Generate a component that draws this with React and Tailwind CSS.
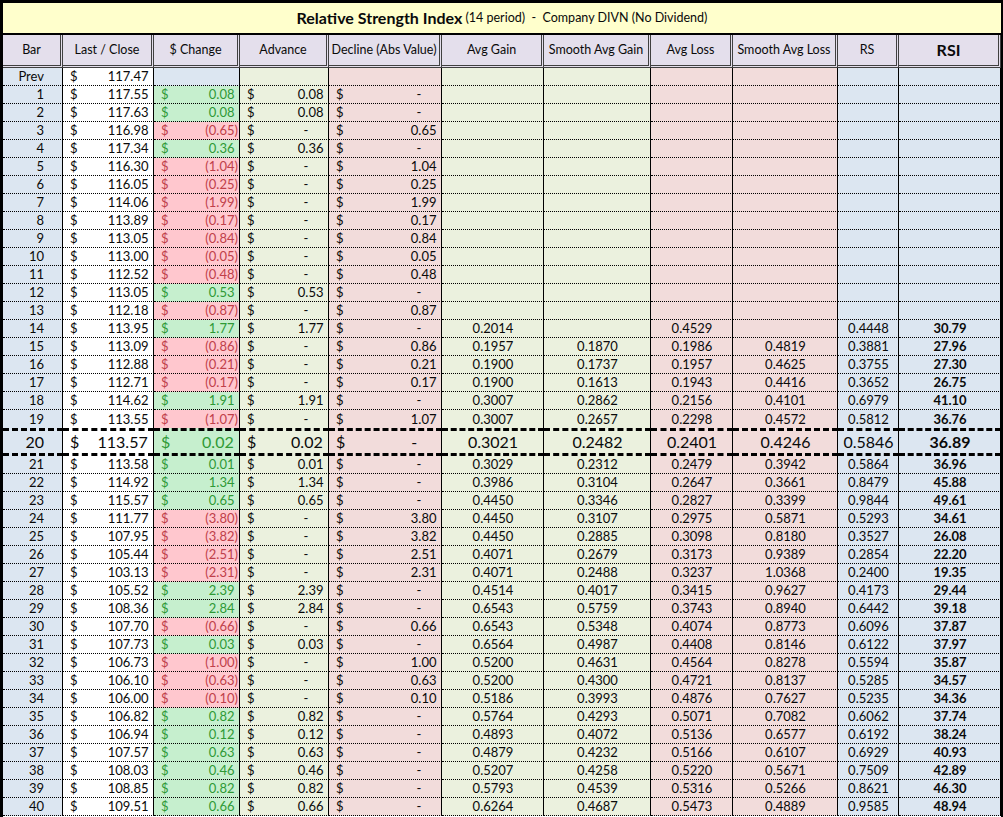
const rows = [
  "1 117.55 0.08",
  "2 117.63 0.08",
  "3 116.98 -0.65",
  "4 117.34 0.36",
  "5 116.30 -1.04",
  "6 116.05 -0.25",
  "7 114.06 -1.99",
  "8 113.89 -0.17",
  "9 113.05 -0.84",
  "10 113.00 -0.05",
  "11 112.52 -0.48",
  "12 113.05 0.53",
  "13 112.18 -0.87",
  "14 113.95 1.77 0.2014 _ 0.4529 _ 0.4448 30.79",
  "15 113.09 -0.86 0.1957 0.1870 0.1986 0.4819 0.3881 27.96",
  "16 112.88 -0.21 0.1900 0.1737 0.1957 0.4625 0.3755 27.30",
  "17 112.71 -0.17 0.1900 0.1613 0.1943 0.4416 0.3652 26.75",
  "18 114.62 1.91 0.3007 0.2862 0.2156 0.4101 0.6979 41.10",
  "19 113.55 -1.07 0.3007 0.2657 0.2298 0.4572 0.5812 36.76",
];

const bigRow = "20 113.57 0.02 0.3021 0.2482 0.2401 0.4246 0.5846 36.89";

const rowsAfter = [
  "21 113.58 0.01 0.3029 0.2312 0.2479 0.3942 0.5864 36.96",
  "22 114.92 1.34 0.3986 0.3104 0.2647 0.3661 0.8479 45.88",
  "23 115.57 0.65 0.4450 0.3346 0.2827 0.3399 0.9844 49.61",
  "24 111.77 -3.80 0.4450 0.3107 0.2975 0.5871 0.5293 34.61",
  "25 107.95 -3.82 0.4450 0.2885 0.3098 0.8180 0.3527 26.08",
  "26 105.44 -2.51 0.4071 0.2679 0.3173 0.9389 0.2854 22.20",
  "27 103.13 -2.31 0.4071 0.2488 0.3237 1.0368 0.2400 19.35",
  "28 105.52 2.39 0.4514 0.4017 0.3415 0.9627 0.4173 29.44",
  "29 108.36 2.84 0.6543 0.5759 0.3743 0.8940 0.6442 39.18",
  "30 107.70 -0.66 0.6543 0.5348 0.4074 0.8773 0.6096 37.87",
  "31 107.73 0.03 0.6564 0.4987 0.4408 0.8146 0.6122 37.97",
  "32 106.73 -1.00 0.5200 0.4631 0.4564 0.8278 0.5594 35.87",
  "33 106.10 -0.63 0.5200 0.4300 0.4721 0.8137 0.5285 34.57",
  "34 106.00 -0.10 0.5186 0.3993 0.4876 0.7627 0.5235 34.36",
  "35 106.82 0.82 0.5764 0.4293 0.5071 0.7082 0.6062 37.74",
  "36 106.94 0.12 0.4893 0.4072 0.5136 0.6577 0.6192 38.24",
  "37 107.57 0.63 0.4879 0.4232 0.5166 0.6107 0.6929 40.93",
  "38 108.03 0.46 0.5207 0.4258 0.5220 0.5671 0.7509 42.89",
  "39 108.85 0.82 0.5793 0.4539 0.5316 0.5266 0.8621 46.30",
  "40 109.51 0.66 0.6264 0.4687 0.5473 0.4889 0.9585 48.94",
];

const headers = [
  ["Bar", "w-[60px]"],
  ["Last / Close", "w-[91px]"],
  ["$ Change", "w-[86px]"],
  ["Advance", "w-[89px]"],
  ["Decline (Abs Value)", "w-[113px]"],
  ["Avg Gain", "w-[102px]"],
  ["Smooth Avg Gain", "w-[107px]"],
  ["Avg Loss", "w-[82px]"],
  ["Smooth Avg Loss", "w-[105px]"],
  ["RS", "w-[61px]"],
];

// accounting style: $ on the left, value right with room for ")"
function Money({ v }) {
  if (v === "") return null;
  let right;
  if (v === "-") {
    right = (
      <>
        -<span className="invisible">00)</span>
      </>
    );
  } else if (v.startsWith("-")) {
    right = <>({v.slice(1)})</>;
  } else {
    right = (
      <>
        {v}
        <span className="invisible">)</span>
      </>
    );
  }
  return (
    <>
      <span>$</span>
      <span className="whitespace-pre">{right}</span>
    </>
  );
}

function Row({ r, big, noLine, prev }) {
  const [bar, close, chg = "", ag = "", sag = "", al = "", sal = "", rs = "", rsi = ""] = r
    .split(" ")
    .map((x) => (x === "_" ? "" : x));
  const neg = chg.startsWith("-");
  const adv = prev ? "" : neg ? "-" : chg;
  const dec = prev ? "" : neg ? chg.slice(1) : "-";

  const line = big
    ? "border-y-[3px] border-dashed border-black"
    : noLine
      ? ""
      : "border-b border-dotted border-black";
  const cell = `flex items-center shrink-0 h-full shadow-[inset_-1px_0_0_#000] ${line}`;
  const money = `${cell} justify-between pl-[7px] pr-[2px]`;
  const mid = `${cell} justify-center`;

  const chgBg = prev
    ? "bg-[#dce6f1]"
    : neg
      ? "bg-[#ffc7ce] text-[#c0404a]"
      : "bg-[#c6efce] text-[#2f9a36]";

  return (
    <div className={`flex ${big ? "h-[28px] text-[16px]" : "h-[18px] text-[13px]"} leading-none`}>
      <div className={`${cell} w-[60px] bg-[#dce6f1] justify-end pr-[19px]`}>{bar}</div>
      <div className={`${money} w-[91px] bg-white`}>
        <Money v={close} />
      </div>
      <div className={`${money} w-[86px] ${chgBg}`}>
        <Money v={chg} />
      </div>
      <div className={`${money} w-[89px] bg-[#ebf1de]`}>
        <Money v={adv} />
      </div>
      <div className={`${money} w-[113px] bg-[#f2dcdb]`}>
        <Money v={dec} />
      </div>
      <div className={`${mid} w-[102px] bg-[#ebf1de]`}>{ag}</div>
      <div className={`${mid} w-[107px] bg-[#ebf1de]`}>{sag}</div>
      <div className={`${mid} w-[82px] bg-[#f2dcdb]`}>{al}</div>
      <div className={`${mid} w-[105px] bg-[#f2dcdb]`}>{sal}</div>
      <div className={`${mid} w-[61px] bg-[#dce6f1]`}>{rs}</div>
      <div className={`${mid} w-[102px] bg-[#dce6f1] font-bold`}>{rsi}</div>
    </div>
  );
}

export default function App() {
  return (
    <div className="w-[1003px] h-[817px] overflow-hidden bg-white border-l-[3px] border-t-[3px] border-r-[2px] border-black font-['Lato',sans-serif] text-[#0a0a0a]">
      <div className="h-[32px] bg-[#ffffcc] border-b-2 border-black flex items-center justify-center whitespace-pre">
        <span className="text-[16px] font-bold">Relative Strength Index</span>
        <span className="text-[12.5px]"> (14 period)  -  Company DIVN (No Dividend)</span>
      </div>

      <div className="flex h-[33px] text-[12.5px]">
        {headers.map(([label, w]) => (
          <div
            key={label}
            className={`${w} shrink-0 flex items-center justify-center bg-[#e4dfec] border-r-[3px] border-b-[3px] border-double border-[#404040] whitespace-nowrap`}
          >
            {label}
          </div>
        ))}
        <div className="w-[102px] shrink-0 flex items-center justify-center bg-[#e4dfec] border-r-[3px] border-b-[3px] border-double border-[#404040] text-[16px] font-bold">
          RSI
        </div>
      </div>

      <Row r="Prev 117.47" prev />
      {rows.map((r, i) => (
        <Row key={r} r={r} noLine={i === rows.length - 1} />
      ))}
      <Row r={bigRow} big />
      {rowsAfter.map((r) => (
        <Row key={r} r={r} />
      ))}
    </div>
  );
}
